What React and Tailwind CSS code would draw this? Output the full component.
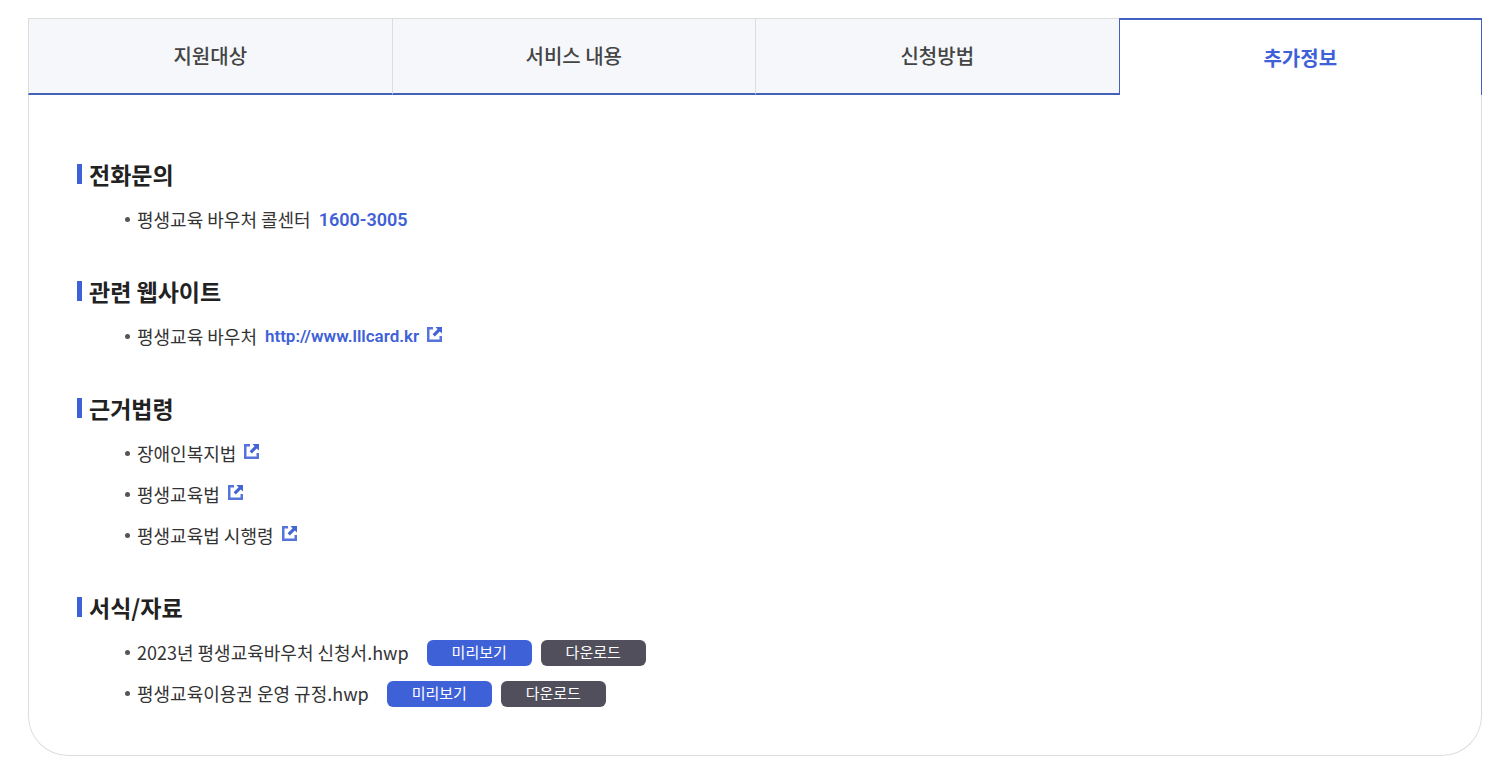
import React, { useState } from 'react';
import clsx from 'clsx';

const tabs = ['지원대상', '서비스 내용', '신청방법', '추가정보'];

const laws = ['장애인복지법', '평생교육법', '평생교육법 시행령'];

const files = ['2023년 평생교육바우처 신청서.hwp', '평생교육이용권 운영 규정.hwp'];

const ExternalIcon = () => (
  <svg className="w-4 h-4 mb-1 ml-2 shrink-0" viewBox="0 0 16 16" fill="none" aria-hidden="true">
    <path d="M6 1.25H1.25v12.5h12.5V9" stroke="#5674dc" strokeWidth="2.5" />
    <path d="M8.5 0H15v6.5L12.8 4.4 7.8 9.4 5.6 7.2l5-5z" fill="#4364d4" />
  </svg>
);

const Section = ({ title, children }) => (
  <section className="mb-9 last:mb-0">
    <h2 className="flex items-center gap-[7px] h-[30px] mb-[10px] text-[23px] font-bold text-[#222]">
      <span className="w-[5px] h-5 bg-[#3f61d7]" />
      {title}
    </h2>
    <ul className="pl-12">{children}</ul>
  </section>
);

const Item = ({ children }) => (
  <li className="flex items-center h-[41px] text-[18px] text-[#333]">
    <span className="w-[5px] h-[5px] mr-[7px] rounded-full bg-[#555]" />
    {children}
  </li>
);

const App = () => {
  const [active, setActive] = useState(3);

  return (
    <main className="min-h-screen bg-white pt-[18px] pb-[14px] pl-7 pr-[22px] font-['Noto_Sans_CJK_KR',sans-serif]">
      {/* Tabs */}
      <div role="tablist" className="grid grid-cols-4">
        {tabs.map((tab, idx) => (
          <button
            key={tab}
            type="button"
            role="tab"
            aria-selected={idx === active}
            onClick={() => setActive(idx)}
            className={clsx(
              'h-[77px] text-[20px]',
              idx === active
                ? 'border-x border-t-2 border-[#4361c2] bg-white font-bold text-[#3f61d7]'
                : 'border-t border-l border-b-2 border-t-[#ddd] border-l-[#ddd] border-b-[#4361b8] bg-[#f5f7fb] font-medium text-[#444]'
            )}
          >
            {tab}
          </button>
        ))}
      </div>

      {/* Panel */}
      <div
        role="tabpanel"
        className="rounded-b-[40px] border border-t-0 border-[#ddd] px-12 pt-16 pb-[41px]"
      >
        <Section title="전화문의">
          <Item>
            평생교육 바우처 콜센터
            <a href="tel:1600-3005" className="ml-2 font-[Roboto,sans-serif] font-semibold text-[#3f61d7]">
              1600-3005
            </a>
          </Item>
        </Section>

        <Section title="관련 웹사이트">
          <Item>
            평생교육 바우처
            <a
              href="http://www.lllcard.kr"
              className="ml-2 flex items-center font-[Roboto,sans-serif] text-[17px] font-semibold text-[#3f61d7]"
            >
              http://www.lllcard.kr
              <ExternalIcon />
            </a>
          </Item>
        </Section>

        <Section title="근거법령">
          {laws.map((law) => (
            <Item key={law}>
              <a href="#law" className="flex items-center">
                {law}
                <ExternalIcon />
              </a>
            </Item>
          ))}
        </Section>

        <Section title="서식/자료">
          {files.map((file) => (
            <Item key={file}>
              {file}
              <div className="ml-[18px] flex gap-[9px] text-[15px] text-white">
                <button type="button" className="w-[105px] h-[26px] rounded-md bg-[#3f61d7]">
                  미리보기
                </button>
                <button type="button" className="w-[105px] h-[26px] rounded-md bg-[#514f5c]">
                  다운로드
                </button>
              </div>
            </Item>
          ))}
        </Section>
      </div>
    </main>
  );
};

export default App;
